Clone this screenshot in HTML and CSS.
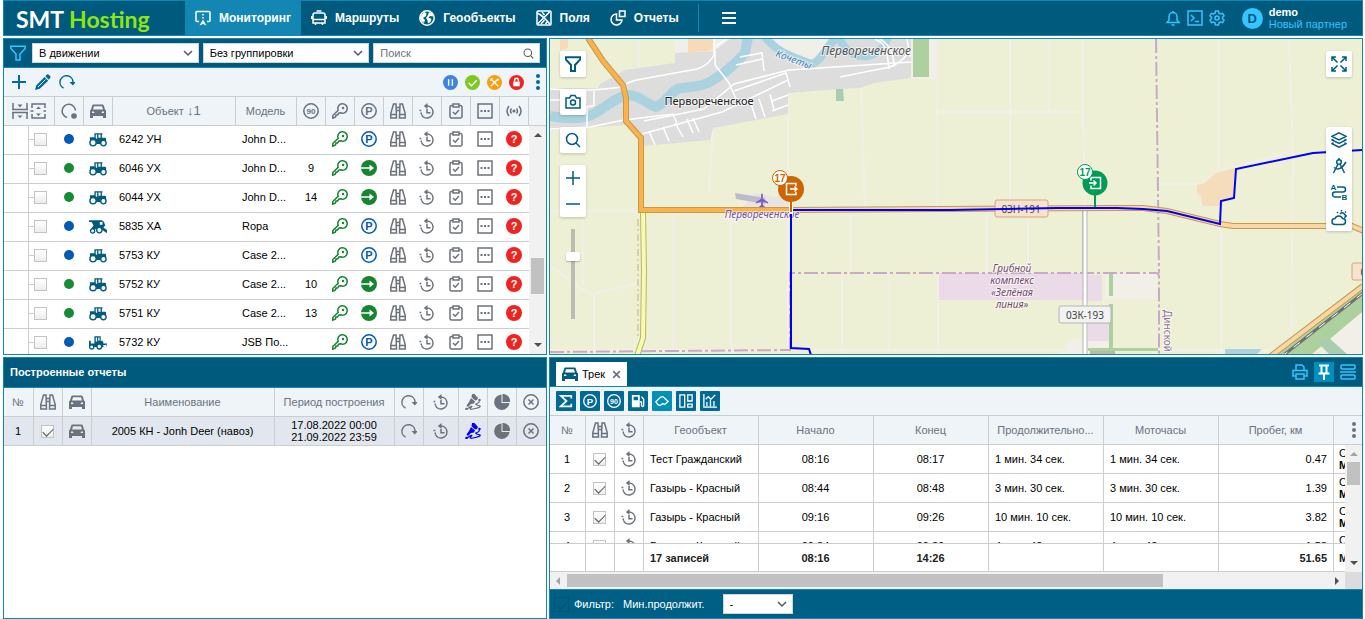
FILE: index.html
```html
<!DOCTYPE html>
<html lang="ru">
  <head>
    <meta charset="utf-8">
    <title>SMT Hosting</title>
    <link rel="stylesheet" href="styles.css">
  </head>
  <body>
    <!-- ICONS -->
    <svg class="sprite" aria-hidden="true">
      <symbol id="monitor" viewBox="0 0 16 16"><path d="M4 11.500H2a1 1 0 0 1-1-1v-8a1 1 0 0 1 1-1h12a1 1 0 0 1 1 1v8a1 1 0 0 1-1 1h-2M8 4v1.500M8 7v1.500"/><path d="M8 9.500l3.500 6L8 14l-3.500 1.500z" fill="currentColor" stroke="none"/></symbol>
      <symbol id="bus" viewBox="0 0 16 16"><path d="M5.500 1h5M4 3h8q2 0 2 2v8H2V5q0-2 2-2zM2 9.500h12M.7 6v3M15.300 6v3M4.500 13v2M11.500 13v2"/></symbol>
      <symbol id="globe" viewBox="0 0 16 16"><circle cx="8" cy="8" r="7.200"/><path d="M5 2l2.500 1L7 6 4 8l2 2-1 3-3-2.500L1 7zM10 2l3 1.500 1.500 3L11 6 9.500 7.500l3 1.500-1 3-2.500 1.500-.5-3L7 8l2-3z" fill="currentColor" stroke="none"/></symbol>
      <symbol id="fields" viewBox="0 0 16 16"><rect x="1" y="1" width="14" height="14" rx="1"/><path d="M1.500 3q7 4 13 12M1.500 14L14 1.500M5 14l3.500-4M9.500 14l1.500-2M6 2l2.500 3"/></symbol>
      <symbol id="reports" viewBox="0 0 16 16"><path d="M6.500 4A5.500 5.500 0 1 0 12 10H6.500zM9.500 1h5.500v5.500H9.500z"/></symbol>
      <symbol id="burger" viewBox="0 0 16 16"><path d="M1 3h14M1 8h14M1 13h14"/></symbol>
      <symbol id="bell" viewBox="0 0 16 16"><path d="M2 12.500h12l-2-2.500V6.500a4 4 0 0 0-8 0V10zM6.500 15h3M8 1v1.500"/></symbol>
      <symbol id="terminal" viewBox="0 0 16 16"><path d="M1 1h14v14H1zM4 5l3 3-3 3M8 11.500h4"/></symbol>
      <symbol id="gear" viewBox="0 0 16 16"><path d="M6.500 1h3l.5 2.200 1.500.8 2.100-.7 1.500 2.600L13.500 7.300v1.400l1.600 1.400-1.500 2.600-2.100-.7-1.500.8-.5 2.200h-3L6 12.800 4.500 12l-2.100.7-1.500-2.600 1.600-1.400V7.300L.9 5.900l1.500-2.600 2.100.7L6 3.200z"/><circle cx="8" cy="8" r="2"/></symbol>
      <symbol id="filter" viewBox="0 0 16 16"><path d="M.8 1.200h14.400v2.300L10 9v6H6V9L.8 3.500z"/></symbol>
      <symbol id="chevron" viewBox="0 0 16 16"><path d="M4 6l4 4 4-4"/></symbol>
      <symbol id="search" viewBox="0 0 16 16"><circle cx="7" cy="7" r="5.500"/><path d="M11 11l4 4"/></symbol>
      <symbol id="plus" viewBox="0 0 16 16"><path d="M8 1v14M1 8h14"/></symbol>
      <symbol id="minus" viewBox="0 0 16 16"><path d="M1 8h14"/></symbol>
      <symbol id="pencil" viewBox="0 0 16 16"><path d="M0 16l1.200-4.600L9.500 3l3.700 3.700-8.500 8.100zM10.300 2.300L12 .6q1-.6 1.800.2l1.500 1.500q.6.900 0 1.500l-1.500 2z" fill="currentColor" stroke="none"/><path d="M3 13l7.500-7.500" stroke="#eef4f7" stroke-width="1"/></symbol>
      <symbol id="refresh" viewBox="0 0 16 16"><path d="M4.500 14A6.500 6.500 0 1 1 14 8.500"/><path d="M10.500 8h6.500L13.800 11.500z" fill="currentColor" stroke="none"/></symbol>
      <symbol id="state" viewBox="0 0 16 16"><path d="M6 14.500A6.700 6.700 0 1 1 14.500 7.500"/><circle cx="13" cy="13" r="2.800" fill="currentColor" stroke="none"/></symbol>
      <symbol id="rows" viewBox="0 0 34 16"><path d="M0 6.500h16M0 9.500h16M1 0v6M15 0v6M1 16v-6M15 16v-6M20 5V1h13v4M20 11v4h13v-4M18.500 8h3M31.500 8h3"/><path d="M5.500 1.500h5L8 4.500zM5.500 12.500h5L8 15zM24 6h5l-2.500-2.500zM24 10.500h5L26.500 13z" fill="currentColor" stroke="none"/></symbol>
      <symbol id="car" viewBox="0 0 16 16"><path d="M3.500 1.500h9q1 0 1.300 1L15 6.500l1 1V15h-3v-2H3v2H0V7.500l1-1 1.200-4q.3-1 1.300-1zM4 3.300L3 6.500h10l-1-3.200zM2 8.500v1.500h2.500l-.5-1.500zM14 8.500v1.500h-2.500l.5-1.500z" fill="currentColor" fill-rule="evenodd" stroke="none"/></symbol>
      <symbol id="ninety" viewBox="0 0 16 16"><circle cx="8" cy="8" r="7.200"/><text x="8" y="11" class="tiny">90</text></symbol>
      <symbol id="parking" viewBox="0 0 16 16"><circle cx="8" cy="8" r="7.200"/><text x="8" y="12" class="letter">P</text></symbol>
      <symbol id="key" viewBox="0 0 16 16"><path d="M6.200 7.300a4.700 4.700 0 1 1 2.500 2.500L7 10l-1.500 2H4l-.5 2-2.700 1.200V12.500z"/><circle cx="11" cy="5" r="1.200" fill="currentColor" stroke="none"/></symbol>
      <symbol id="go" viewBox="0 0 16 16"><circle cx="8" cy="8" r="8" fill="currentColor" stroke="none"/><path d="M0 8h10" stroke="#fff"/><path d="M8.500 4.500L13 8l-4.500 3.500z" fill="#fff" stroke="none"/></symbol>
      <symbol id="bino" viewBox="0 0 16 16"><path d="M3.500 1H6l.5 14H.8V10.500zM12.500 1H10L9.500 15h5.700v-4.500zM1 11.500h5.500M9.500 11.500H15M6.200 4.500h3.600M6.200 7.500h3.600"/></symbol>
      <symbol id="history" viewBox="0 0 16 16"><path d="M8 3a6 6 0 1 1-5.600 8.200M8 6v3.800h3.500"/><path d="M8.500 0v6L4.800 3z" fill="currentColor" stroke="none"/><path d="M.5 7.500h1.800M1.500 10.300h1.500" /></symbol>
      <symbol id="task" viewBox="0 0 16 16"><path d="M5 2.500H3.500a1.500 1.500 0 0 0-1.500 1.500v9.500A1.500 1.500 0 0 0 3.500 15h9a1.500 1.500 0 0 0 1.500-1.500V4a1.500 1.500 0 0 0-1.500-1.500H11M5 1h6v3H5zM5 9l2.200 2.200L11 7"/></symbol>
      <symbol id="more" viewBox="0 0 16 16"><path d="M1 1h14v14H1z"/><path d="M3.500 7h2v2h-2zM7 7h2v2H7zM10.500 7h2v2h-2z" fill="currentColor" stroke="none"/></symbol>
      <symbol id="signal" viewBox="0 0 16 16"><circle cx="8" cy="8" r="1.600" fill="currentColor" stroke="none"/><path d="M5.500 5.500q-2 2.500 0 5M10.500 5.500q2 2.500 0 5M3 3q-4 5 0 10M13 3q4 5 0 10"/></symbol>
      <symbol id="question" viewBox="0 0 16 16"><circle cx="8" cy="8" r="8" fill="currentColor" stroke="none"/><text x="8" y="12" class="letter letter-white">?</text></symbol>
      <symbol id="tractor" viewBox="0 0 20 16"><path d="M6 1h9v1.500h-.7V6h3.700l1 1v6H3L1 8V5.500h5V2.500zM7.500 2.500v4l1.500 1V2.500zM10.500 2.500V6h2.300V2.500z" fill="currentColor" fill-rule="evenodd" stroke="none"/><circle cx="4.500" cy="11.500" r="3.500" fill="#fff"/><circle cx="16" cy="12" r="3" fill="#fff"/></symbol>
      <symbol id="combine" viewBox="0 0 20 16"><path d="M0 1h15v1.500h1.500L18 7l-2 2 6 4.500V15h-3l-5-4H2L5 7 3 3H0zM12 3v3h3V3z" fill="currentColor" fill-rule="evenodd" stroke="none"/><circle cx="4" cy="13" r="2.300" fill="#fff"/><circle cx="11.500" cy="12" r="3" fill="#fff"/></symbol>
      <symbol id="loader" viewBox="0 0 20 16"><path d="M6 1h7v5h2l1 2v5H0V6h2v3h4zM7.500 2.500V7H9V2.500zM10.300 2.500V6h1.400V2.500z" fill="currentColor" fill-rule="evenodd" stroke="none"/><circle cx="3" cy="13" r="2.300" fill="#fff"/><circle cx="11.500" cy="12.500" r="2.700" fill="#fff"/><path d="M15 10h4M22 7q-4 3.500 0 7"/></symbol>
      <symbol id="pause" viewBox="0 0 16 16"><circle cx="8" cy="8" r="8" fill="#3e84dc" stroke="none"/><path d="M6 4.500v7M10 4.500v7" stroke="#fff"/></symbol>
      <symbol id="ok" viewBox="0 0 16 16"><circle cx="8" cy="8" r="8" fill="#7ec820" stroke="none"/><path d="M4 8.500L7 11.500 12.500 5.500" stroke="#fff"/></symbol>
      <symbol id="repair" viewBox="0 0 16 16"><circle cx="8" cy="8" r="8" fill="#ff9c0a" stroke="none"/><path d="M4 4l8 8M12 4l-8 8M3.500 6L6 3.500M10 6l3-1" stroke="#fff"/></symbol>
      <symbol id="lock" viewBox="0 0 16 16"><circle cx="8" cy="8" r="8" fill="#ee2420" stroke="none"/><path d="M4.500 7h7v5h-7z" fill="#fff" stroke="none"/><path d="M6 7V5.500a2 2 0 0 1 4 0V7" stroke="#fff"/></symbol>
      <symbol id="dots" viewBox="0 0 4 16"><g fill="currentColor" stroke="none"><circle cx="2" cy="2" r="2"/><circle cx="2" cy="8" r="2"/><circle cx="2" cy="14" r="2"/></g></symbol>
      <symbol id="track" viewBox="0 0 16 16"><path d="M7 0l2-.5L13 4l-1 2-2 .5L6.500 3zM6 4l4 3.500-1 2-3 .5-3 3-1.500-1.500L4 8z" fill="currentColor" stroke="none"/><path d="M14 6.500q1 2-2 3t1.500 2-3 3-4.500-1-4 1.500" stroke-width="1.200"/><circle cx="1.500" cy="15" r="1.300" fill="currentColor" stroke="none"/><circle cx="14.500" cy="6" r="1.200" fill="currentColor" stroke="none"/></symbol>
      <symbol id="pie" viewBox="0 0 16 16"><path d="M7.500 .5a7.700 7.700 0 1 0 8 8.500H7.500z" fill="currentColor" stroke="none"/><path d="M8.500 0a7 7 0 0 1 7.500 8H8.500z" fill="currentColor" stroke="none"/></symbol>
      <symbol id="close" viewBox="0 0 16 16"><circle cx="8" cy="8" r="7.200"/><path d="M5.500 5.500l5 5M10.500 5.500l-5 5"/></symbol>
      <symbol id="cross" viewBox="0 0 16 16"><path d="M2 2l12 12M14 2L2 14"/></symbol>
      <symbol id="printer" viewBox="0 0 16 16"><path d="M4 6V1h6l2 2v3M4 12H1V6.500h14V12h-3M4 10h8v5H4z"/></symbol>
      <symbol id="pin" viewBox="0 0 16 16"><path d="M3 1.500h10M5.500 2v7M10.500 2v7M2.500 9.500h11M8 9.500V16" stroke-width="2"/></symbol>
      <symbol id="list" viewBox="0 0 16 16"><rect x="1" y="1" width="14" height="4" rx="1"/><path d="M0 8h16"/><rect x="1" y="11" width="14" height="4" rx="1"/></symbol>
      <symbol id="sum" viewBox="0 0 16 16"><path d="M14 5V2H2l6.500 6L2 14h12v-3"/></symbol>
      <symbol id="fuel" viewBox="0 0 16 16"><path d="M1 1h9v14H1zM3 3v4h5V3z" fill="currentColor" fill-rule="evenodd" stroke="none"/><path d="M12 3l2.500 3v7q-1.500 3-2.500 0V9h-2"/></symbol>
      <symbol id="shape" viewBox="0 0 16 16"><path d="M3.500 12.500L1 9 6.500 3.500 9 3l6 5.500-4 3.500-2-1-3 2z"/></symbol>
      <symbol id="blocks" viewBox="0 0 16 16"><path d="M1 1h5.500v14H1zM10 1h5v7h-5zM10 11.500h5V15h-5z"/></symbol>
      <symbol id="chart" viewBox="0 0 16 16"><path d="M1 0v15h15M4.500 14V9M8.500 14V7M12.500 14V8M3 6l3-3 3 3 5-5"/></symbol>
      <symbol id="camera" viewBox="0 0 16 16"><path d="M1 4h3.500L6 1.500h4L11.500 4H15v10H1z"/><circle cx="8" cy="8.500" r="2.500"/></symbol>
      <symbol id="expand" viewBox="0 0 16 16"><path d="M1 5V1h4M11 1h4v4M15 11v4h-4M5 15H1v-4M1 1l5.500 5.500M15 1L9.500 6.500M15 15L9.500 9.500M1 15l5.500-5.500"/></symbol>
      <symbol id="layers" viewBox="0 0 16 16"><path d="M8 .8l7 3.500-7 3.500-7-3.500zM2.500 7L1 8l7 3.500L15 8l-1.500-1M2.500 10.700L1 11.700l7 3.500 7-3.500-1.500-1"/></symbol>
      <symbol id="compass" viewBox="0 0 16 16"><circle cx="8" cy="4" r="2.300"/><path d="M7 6L2.500 15M9 6l4.500 9M3 9.500q6 4.500 12-5.500M8 0v2"/></symbol>
      <symbol id="route" viewBox="0 0 16 16"><path d="M6 3h6a2.500 2.500 0 0 1 0 5H4a2.500 2.500 0 0 0 0 5h6"/><text x="2.500" y="5.500" class="tiny">A</text><text x="13.500" y="15.500" class="tiny">B</text></symbol>
      <symbol id="weather" viewBox="0 0 16 16"><path d="M4 14.500a3 3 0 0 1 0-6 4 4 0 0 1 7.500 0 3 3 0 0 1 0 6zM9 4a3 3 0 0 1 4.500 4M10.500 0v1.500M15 1.500L14 2.500M16 6h-1.500M6 2l1 1"/></symbol>
      <symbol id="plane" viewBox="0 0 16 16"><path d="M7 1q1-2 2 0v5l6 4v1.500L9 9.500V13l2 1.500v1H5v-1L7 13V9.500L1 11.500V10l6-4z" fill="currentColor" stroke="none"/></symbol>
    </svg>

    <header class="top">
      <a class="logo" href="#"><span>SMT</span> Hosting</a>
      <nav class="menu">
        <a class="active" href="#"><svg class="icon"><use href="#monitor"/></svg>Мониторинг</a>
        <a href="#"><svg class="icon"><use href="#bus"/></svg>Маршруты</a>
        <a href="#"><svg class="icon"><use href="#globe"/></svg>Геообъекты</a>
        <a href="#"><svg class="icon"><use href="#fields"/></svg>Поля</a>
        <a href="#"><svg class="icon"><use href="#reports"/></svg>Отчеты</a>
        <button class="burger" aria-label="Меню"><svg class="icon thick"><use href="#burger"/></svg></button>
      </nav>
      <div class="tools">
        <button aria-label="Уведомления"><svg class="icon"><use href="#bell"/></svg></button>
        <button aria-label="Консоль"><svg class="icon"><use href="#terminal"/></svg></button>
        <button aria-label="Настройки"><svg class="icon"><use href="#gear"/></svg></button>
      </div>
      <div class="user">
        <span class="avatar">D</span>
        <div><b>demo</b><span>Новый партнер</span></div>
      </div>
    </header>

    <!-- OBJECTS -->
    <section class="panel objects">
      <form class="filters">
        <svg class="icon"><use href="#filter"/></svg>
        <label class="select"><select aria-label="Состояние"><option>В движении</option></select><svg class="icon"><use href="#chevron"/></svg></label>
        <label class="select"><select aria-label="Группировка"><option>Без группировки</option></select><svg class="icon"><use href="#chevron"/></svg></label>
        <label class="select"><input type="text" placeholder="Поиск" aria-label="Поиск"><svg class="icon small"><use href="#search"/></svg></label>
      </form>
      <div class="toolbar">
        <button aria-label="Добавить"><svg class="icon thick"><use href="#plus"/></svg></button>
        <button aria-label="Изменить"><svg class="icon"><use href="#pencil"/></svg></button>
        <button aria-label="Обновить"><svg class="icon"><use href="#refresh"/></svg></button>
        <div class="states">
          <button aria-label="Пауза"><svg class="icon"><use href="#pause"/></svg></button>
          <button aria-label="Исправен"><svg class="icon"><use href="#ok"/></svg></button>
          <button aria-label="Ремонт"><svg class="icon"><use href="#repair"/></svg></button>
          <button aria-label="Заблокирован"><svg class="icon"><use href="#lock"/></svg></button>
          <button aria-label="Еще"><svg class="icon dots"><use href="#dots"/></svg></button>
        </div>
      </div>
      <div class="grid">
        <table>
          <colgroup>
            <col class="w51"><col class="w29"><col class="w29"><col><col class="w61">
            <col class="w29"><col class="w29"><col class="w29"><col class="w29"><col class="w29"><col class="w29"><col class="w29"><col class="w29">
            <col class="w17">
          </colgroup>
          <thead>
            <tr>
              <th><svg class="icon rows"><use href="#rows"/></svg></th>
              <th><svg class="icon"><use href="#state"/></svg></th>
              <th><svg class="icon"><use href="#car"/></svg></th>
              <th>Объект <span class="sort">↓1</span></th>
              <th>Модель</th>
              <th><svg class="icon"><use href="#ninety"/></svg></th>
              <th><svg class="icon"><use href="#key"/></svg></th>
              <th><svg class="icon"><use href="#parking"/></svg></th>
              <th><svg class="icon"><use href="#bino"/></svg></th>
              <th><svg class="icon"><use href="#history"/></svg></th>
              <th><svg class="icon"><use href="#task"/></svg></th>
              <th><svg class="icon"><use href="#more"/></svg></th>
              <th><svg class="icon"><use href="#signal"/></svg></th>
              <th></th>
            </tr>
          </thead>
          <tbody id="objects"></tbody>
        </table>
        <div class="vscroll"><i class="up"></i><span class="thumb"></span><i class="down"></i></div>
      </div>
    </section>

    <!-- MAP -->
    <section class="panel map">
      <svg class="canvas" viewBox="0 0 812 315" preserveAspectRatio="xMidYMid slice">
        <rect width="812" height="315" fill="#edf0d5"/>
        <!-- field tracks -->
        <g fill="none" stroke="#f2efe9" stroke-width="2">
          <path d="M387 0v168M311 50l4 118M460 0v168M499 0v74M533 0v74l2 94M387 73h146M301 173v60M437 173v60M478 173v60M292 235v75M339 235v75M388 235v78"/>
          <path d="M669 0v130M671 186v129M739 0l4 115-2 200M609 145h40l18-12 72-20"/>
          <path d="M163 89l-4 62M238 54v258M123 175v140M181 175v140M33 180v66M0 172h90M0 227l31 22 12 6 45-11M44 255v60M125 24h0M0 311h812M89 0v30"/>
        </g>
        <path d="M125 0h55l-16 14h-39zM361 0h26v40h-26z" fill="#f2efe9"/>
        <path d="M555 234h52v26h-52zM520 300h40v15h-50zM770 315l42-52v52z" fill="#f2efe9"/>
        <!-- village -->
        <path d="M0 49h48l2-4 25-14 50-7V14l39-2 16-12h181v39l-37 5-14 5-20 1-52 4v21l-75 14-3 12-66 6-18-21-76 5z" fill="#ddd"/>
        <path d="M220 0h58l-4 14-14 8-22-8z" fill="#f2efe9"/>
        <path d="M138 0h25v11l-25 3zM10 0h8v9l-8 3z" fill="#f8dab8"/>
        <path d="M363 0h16v38h-16z" fill="#add19e"/>
        <path d="M286 50h7l1 12h-8z" fill="#a9cdb0"/>
        <g fill="none" stroke="#aad3df" stroke-width="10">
          <path d="M0 77q18 4 35 1c14-2 28-20 43-22 12 0 20 10 28 12 12-5 15-18 25-19 12-2 18-1 27-5 14-8 22-14 37-30l3-16"/>
          <path d="M214-3c12 15 24 20 48 28 12-4 14-22 27-26 6 12 14 20 29 18 14-4 18-12 20-20" stroke-width="8"/>
        </g>
        <!-- streets -->
        <g fill="none" stroke="#fff" stroke-width="1.500">
          <path d="M0 50q40 3 72-2 6-6 20-8l55-10q12-4 17-14V0M165 12v14l14 18 8 18M94 82l60-12 30-25 55-14 122-8"/>
          <path d="M0 90l40-2 34-7 50-6M92 95l80-22 66-32M165 8l14-10M36 52v12q-2 3-6 3M44 52v14q-2 2-12 2M0 61h34M37 66v22"/>
          <path d="M99 92l6 14M113 88l6 14M125 84l8 14M137 80l6 14M143 79l6 14M123 76l4 8M200 62l6 18M209 60l6 18M220 55l4 16M184 52l52-18 4 14M186 26l26-6M190 18l22-4 2 18M222 62l16-6M222 72l16-6"/>
          <path d="M290 38l40-8q20-2 31-20M325 0q10 4 12 14l2 16M330 0q14 8 14 28M357 0l3 18"/>
        </g>
        <!-- land use -->
        <path d="M389 234h144v27H389zM537 236h15v26h-15zM538 276h21v26h-21z" fill="#ebdbe8"/>
        <path d="M559 234h4v23h-4zM559 265h4v45h-4zM538 309h70v3h-70zM532 172h2v62h-2z" fill="#add19e"/>
        <path d="M540 312h25v3h-25z" fill="#b9b9a8"/>
        <path d="M647 146l8-2 10-10 20-5v31l-15 3v4h-17l-2-9-4-4z" fill="#f5dcba"/>
        <path d="M193 168l12-14 20 4 14-6v16z" fill="#e7e4e2"/>
        <path d="M185 154l30 5v6l-29-5z" fill="#bbbbcb"/>
        <path d="M675 310h37l-5 5h-32z" fill="#aad3df"/>
        <path d="M728 315l84-66v24l-50 42z" fill="#add19e"/>
        <path d="M767 303l12-4 18 16h-18z" fill="#a9cdb0"/>
        <!-- borders -->
        <g fill="none" stroke="#c8aac8" stroke-width="2" stroke-dasharray="14 3 3 3">
          <path d="M240 312v-78h366q3 0 3 4v77M0 313l240-2M606 0l3 234"/>
        </g>
        <path d="M88 180v118" fill="none" stroke="#c9b083" stroke-dasharray="7 3 2 3"/>
        <!-- roads -->
        <g fill="none">
          <path d="M93 172l1 60-1 67-6 18" stroke="#b9b66a" stroke-width="6"/>
          <path d="M93 172l1 60-1 67-6 18" stroke="#f7fab0" stroke-width="4"/>
          <path d="M535 172v143" stroke="#b5b5b5" stroke-width="5"/>
          <path d="M535 172v143" stroke="#fff" stroke-width="3"/>
          <path d="M238 171l327-2 28 0 24 3 53 13 13 2h119l12 5M813 247l-92 70" stroke="#c39a50" stroke-width="6"/>
          <path d="M238 171l327-2 28 0 24 3 53 13 13 2h119l12 5M813 247l-92 70" stroke="#fcd6a4" stroke-width="4"/>
          <path d="M38-1l15 23 20 24 3 13v23l15 17v72h150" stroke="#c39a50" stroke-width="6"/>
          <path d="M38-1l15 23 20 24 3 13v23l15 17v72h150" stroke="#fbb24a" stroke-width="4"/>
          <path d="M813 254l-78 61" stroke="#707070" stroke-width="3"/>
          <path d="M813 254l-78 61" stroke="#fff" stroke-width="1" stroke-dasharray="8 8"/>
        </g>
        <!-- labels -->
        <g class="place">
          <text x="159" y="66" class="town">Первореченское</text>
          <text x="316" y="16" class="district">Первореченское</text>
          <text x="212" y="179" class="airport">Первореченское</text>
          <text x="244" y="24" class="river" transform="rotate(20 244 20)">Кочеты</text>
          <text class="factory" y="233"><tspan x="462">Грибной</tspan><tspan x="462" dy="12">комплекс</tspan><tspan x="462" dy="12">«Зелёная</tspan><tspan x="462" dy="12">линия»</tspan></text>
          <text class="region" transform="translate(614 292) rotate(90)">Динской</text>
        </g>
        <g class="plate">
          <rect x="445" y="161" width="53" height="17" rx="2" fill="#f8e2cc" stroke="#d0a684"/>
          <text x="471" y="174">03Н-191</text>
          <rect x="509" y="267" width="52" height="17" rx="2" fill="#f2f2f2" stroke="#b4b4b4"/>
          <text x="535" y="280">03К-193</text>
          <rect x="802" y="224" width="53" height="17" rx="2" fill="#f8e2cc" stroke="#d0a684"/>
          <text x="830" y="237">03Н-191</text>
        </g>
        <use href="#plane" x="205" y="154" width="14" height="15" color="#7d5fc0"/>
        <!-- track -->
        <path d="M261 316l-2-6-18-1V171h160l106-2h60l26 1 24 2 53 13 1-23 13-3 2-29 77-16 49-3" fill="none" stroke="#0000f5" stroke-width="2"/>
        <g class="marker" color="#cd6400">
          <path d="M241 160v15" stroke="#fff" stroke-width="4"/><path d="M241 160v13" stroke="currentColor" stroke-width="2"/>
          <circle cx="241" cy="150" r="13" fill="currentColor"/>
          <path d="M246 147v-2.500h-9.500v11H246V153M240 150h7M244.500 147.500l2.500 2.500-2.500 2.500" fill="none" stroke="#fff" stroke-width="1.500"/>
          <circle cx="230" cy="139" r="7.500" fill="#fff" stroke="currentColor"/>
          <text x="230" y="143">17</text>
        </g>
        <g class="marker" color="#009b55">
          <path d="M545 154v14" stroke="currentColor" stroke-width="2"/>
          <circle cx="545" cy="144" r="12.500" fill="currentColor"/>
          <path d="M541 141.500v-3h9.500v11H541v-3M539 144h7M543.500 141.500l2.500 2.500-2.500 2.500" fill="none" stroke="#fff" stroke-width="1.500"/>
          <circle cx="535" cy="133" r="7.500" fill="#fff" stroke="currentColor"/>
          <text x="535" y="137">17</text>
        </g>
      </svg>
      <div class="controls left">
        <button class="box" aria-label="Фильтр"><svg class="icon thick"><use href="#filter"/></svg></button>
        <button class="box" aria-label="Снимок"><svg class="icon"><use href="#camera"/></svg></button>
        <button class="box" aria-label="Найти"><svg class="icon"><use href="#search"/></svg></button>
        <div class="box"><button aria-label="Ближе"><svg class="icon"><use href="#plus"/></svg></button><button aria-label="Дальше"><svg class="icon"><use href="#minus"/></svg></button></div>
        <input class="zoom" type="range" min="0" max="100" value="72" aria-label="Масштаб">
      </div>
      <div class="controls right">
        <button class="box" aria-label="На весь экран"><svg class="icon"><use href="#expand"/></svg></button>
        <div class="box layers">
          <button aria-label="Слои"><svg class="icon"><use href="#layers"/></svg></button>
          <button aria-label="Измерение"><svg class="icon"><use href="#compass"/></svg></button>
          <button aria-label="Маршрут"><svg class="icon"><use href="#route"/></svg></button>
          <button aria-label="Погода"><svg class="icon"><use href="#weather"/></svg></button>
        </div>
      </div>
    </section>

    <!-- REPORTS -->
    <section class="panel reports">
      <h2>Построенные отчеты</h2>
      <table class="lined">
        <colgroup>
          <col class="w30"><col class="w29"><col class="w29"><col><col class="w120">
          <col class="w29"><col class="w35"><col class="w29"><col class="w29"><col class="w29">
        </colgroup>
        <thead>
          <tr>
            <th>№</th>
            <th><svg class="icon"><use href="#bino"/></svg></th>
            <th><svg class="icon"><use href="#car"/></svg></th>
            <th>Наименование</th>
            <th>Период построения</th>
            <th><svg class="icon"><use href="#refresh"/></svg></th>
            <th><svg class="icon"><use href="#history"/></svg></th>
            <th><svg class="icon"><use href="#track"/></svg></th>
            <th><svg class="icon"><use href="#pie"/></svg></th>
            <th><svg class="icon"><use href="#close"/></svg></th>
          </tr>
        </thead>
        <tbody>
          <tr class="selected">
            <td>1</td>
            <td><input type="checkbox" checked aria-label="Показать отчет"></td>
            <td><svg class="icon"><use href="#car"/></svg></td>
            <td>2005 КН - Jonh Deer (навоз)</td>
            <td>17.08.2022 00:00<br>21.09.2022 23:59</td>
            <td><svg class="icon"><use href="#refresh"/></svg></td>
            <td><svg class="icon"><use href="#history"/></svg></td>
            <td><svg class="icon bright"><use href="#track"/></svg></td>
            <td><svg class="icon"><use href="#pie"/></svg></td>
            <td><svg class="icon"><use href="#close"/></svg></td>
          </tr>
        </tbody>
      </table>
    </section>

    <!-- TRACK -->
    <section class="panel trek">
      <div class="tabs">
        <a class="tab" href="#"><svg class="icon"><use href="#car"/></svg>Трек<svg class="icon cross"><use href="#cross"/></svg></a>
        <div class="tab-tools">
          <button aria-label="Печать"><svg class="icon"><use href="#printer"/></svg></button>
          <button class="on" aria-label="Закрепить"><svg class="icon"><use href="#pin"/></svg></button>
          <button aria-label="Список"><svg class="icon"><use href="#list"/></svg></button>
        </div>
      </div>
      <div class="toolbar tiles">
        <button aria-label="Итоги"><svg class="icon thick"><use href="#sum"/></svg></button>
        <button aria-label="Стоянки"><svg class="icon"><use href="#parking"/></svg></button>
        <button aria-label="Скорость"><svg class="icon"><use href="#ninety"/></svg></button>
        <button aria-label="Топливо"><svg class="icon"><use href="#fuel"/></svg></button>
        <button class="on" aria-label="Геообъекты"><svg class="icon"><use href="#shape"/></svg></button>
        <button aria-label="Блоки"><svg class="icon"><use href="#blocks"/></svg></button>
        <button aria-label="График"><svg class="icon"><use href="#chart"/></svg></button>
      </div>
      <div class="grid">
        <div class="rows-area">
          <table class="lined">
            <colgroup>
              <col class="w36"><col class="w29"><col class="w29">
              <col class="w115"><col class="w115"><col class="w115"><col class="w115"><col class="w115"><col class="w115"><col>
            </colgroup>
            <thead>
              <tr>
                <th>№</th>
                <th><svg class="icon"><use href="#bino"/></svg></th>
                <th><svg class="icon"><use href="#history"/></svg></th>
                <th>Геообъект</th>
                <th>Начало</th>
                <th>Конец</th>
                <th>Продолжительно...</th>
                <th>Моточасы</th>
                <th>Пробег, км</th>
                <th class="menu-cell"><svg class="icon dots"><use href="#dots"/></svg></th>
              </tr>
            </thead>
            <tbody id="trek"></tbody>
          </table>
        </div>
        <table class="lined total">
          <colgroup>
            <col class="w36"><col class="w29"><col class="w29">
            <col class="w115"><col class="w115"><col class="w115"><col class="w115"><col class="w115"><col class="w115"><col>
          </colgroup>
          <tbody>
            <tr>
              <td></td><td></td><td></td>
              <td class="text">17 записей</td><td>08:16</td><td>14:26</td>
              <td></td><td></td>
              <td class="num">51.65</td><td class="cut">М</td>
            </tr>
          </tbody>
        </table>
        <div class="vscroll"><i class="up off"></i><span class="thumb"></span><i class="down"></i></div>
      </div>
      <div class="hscroll"><i class="prev"></i><span class="thumb"></span><i class="next"></i><span class="corner"></span></div>
      <div class="bottom-bar">
        <input type="checkbox" id="use-filter" checked>
        <label for="use-filter">Фильтр:</label>
        <label for="min-time">Мин.продолжит.</label>
        <span class="select"><select id="min-time"><option>-</option></select><svg class="icon"><use href="#chevron"/></svg></span>
      </div>
    </section>

    <!-- JAVASCRIPT -->
    <script>
      const icon = (name, cls = "") =>
        `<svg class="icon ${cls}"><use href="#${name}"/></svg>`;

      // name, model, speed (0 = parked), vehicle
      const objects = [
        ["6242 УН", "John D...", 0, "tractor"],
        ["6046 УХ", "John D...", 9, "tractor"],
        ["6044 УХ", "John D...", 14, "tractor"],
        ["5835 ХА", "Ropa", 0, "combine"],
        ["5753 КУ", "Case 2...", 0, "tractor"],
        ["5752 КУ", "Case 2...", 10, "tractor"],
        ["5751 КУ", "Case 2...", 13, "tractor"],
        ["5732 КУ", "JSB По...", 0, "loader"],
      ];

      document.querySelector("#objects").innerHTML = objects
        .map(
          ([name, model, speed, vehicle]) => `
        <tr>
          <td class="tree"><span><input type="checkbox" aria-label="${name}"></span></td>
          <td><span class="dot ${speed ? "moving" : ""}"></span></td>
          <td>${icon(vehicle, "vehicle")}</td>
          <td class="text">${name}</td>
          <td class="text">${model}</td>
          <td>${speed || ""}</td>
          <td>${icon("key", "green")}</td>
          <td>${speed ? icon("go", "green") : icon("parking", "blue")}</td>
          <td>${icon("bino")}</td>
          <td>${icon("history")}</td>
          <td>${icon("task")}</td>
          <td>${icon("more")}</td>
          <td>${icon("question", "red")}</td>
          <td></td>
        </tr>`
        )
        .join("");

      const trek = [
        ["Тест Гражданский", "08:16", "08:17", "1 мин. 34 сек.", "0.47"],
        ["Газырь - Красный", "08:44", "08:48", "3 мин. 30 сек.", "1.39"],
        ["Газырь - Красный", "09:16", "09:26", "10 мин. 10 сек.", "3.82"],
        ["Газырь - Красный", "09:34", "09:39", "4 мин. 42 сек.", "1.58"],
      ];

      document.querySelector("#trek").innerHTML = trek
        .map(
          ([place, start, end, time, km], i) => `
        <tr>
          <td>${i + 1}</td>
          <td><input type="checkbox" checked aria-label="${place}"></td>
          <td>${icon("history")}</td>
          <td class="text">${place}</td>
          <td>${start}</td>
          <td>${end}</td>
          <td class="text">${time}</td>
          <td class="text">${time}</td>
          <td class="num">${km}</td>
          <td class="cut">С<br><b>М</b></td>
        </tr>`
        )
        .join("");
    </script>
  </body>
</html>
```
FILE: styles.css
```css
* {
  box-sizing: border-box;
}

body {
  margin: 0;
  padding: 0 2px 0 3px;
  height: 100vh;
  display: grid;
  grid-template-columns: minmax(0, 544fr) minmax(0, 814fr);
  grid-template-rows: 36px minmax(0, 317fr) minmax(0, 262fr);
  gap: 2px;
  font: 11px/12px "Liberation Sans", Arial, sans-serif;
  color: #000;
  background-color: #fff;
}

a {
  color: inherit;
  text-decoration: none;
}

button {
  display: flex;
  align-items: center;
  justify-content: center;
  border: 0;
  padding: 0;
  background: none;
  color: inherit;
}

.sprite {
  display: none;
}

.icon {
  width: 16px;
  height: 16px;
  flex: none;
  fill: none;
  stroke: currentColor;
  stroke-width: 1.5;
  overflow: visible;
}

.icon.thick {
  stroke-width: 2;
}

.icon.small {
  width: 11px;
  height: 11px;
}

.icon.rows {
  width: 34px;
}

.icon.vehicle {
  width: 18px;
  height: 15px;
}

.icon.dots {
  width: 4px;
}

.tiny,
.letter {
  font-family: "Liberation Sans", Arial, sans-serif;
  font-weight: bold;
  text-anchor: middle;
  fill: currentColor;
  stroke: none;
}

.tiny {
  font-size: 8px;
}

.letter {
  font-size: 11px;
}

.letter-white {
  fill: #fff;
}

/* header */
.top {
  grid-column: 1 / 3;
  display: flex;
  align-items: stretch;
  border: 1px solid #1386b4;
  background-color: #005a7d;
  color: #fff;
}

.logo {
  width: 181px;
  padding-left: 12px;
  font: bold 23px/36px Lato, "Noto Sans", sans-serif;
  color: #8de610;
}

.logo span {
  color: #fff;
}

.menu {
  display: flex;
  flex: 1;
  font-size: 12px;
  font-weight: bold;
}

.menu a {
  display: flex;
  align-items: center;
  gap: 8px;
  padding: 0 10px;
}

.menu a.active {
  background-color: #1386b4;
}

.burger {
  margin: 3px 0 3px 9px;
  padding-left: 22px;
  border-left: 1px solid #1386b4;
}

.tools {
  display: flex;
  gap: 6px;
  align-items: center;
  color: #35c5ff;
}

.user {
  display: flex;
  align-items: center;
  gap: 6px;
  padding: 0 15px 0 17px;
}

.user b,
.user div span {
  display: block;
}

.user div span {
  color: #35c5ff;
}

.avatar {
  width: 21px;
  border-radius: 50%;
  background-color: #35c5ff;
  color: #005a7d;
  font-size: 13px;
  font-weight: bold;
  line-height: 21px;
  text-align: center;
}

/* panels */
.panel {
  position: relative;
  display: flex;
  flex-direction: column;
  min-height: 0;
  overflow: hidden;
  border: 1px solid #1386b4;
}

.filters {
  display: flex;
  align-items: center;
  gap: 4px;
  height: 29px;
  padding: 0 6px;
  background-color: #005a7d;
  border-bottom: 1px solid #1386b4;
  color: #35c5ff;
}

.filters > .icon {
  margin-right: 2px;
}

.select {
  position: relative;
  flex: 1;
  min-width: 0;
}

.select select,
.select input {
  display: block;
  width: 100%;
  height: 20px;
  margin: 0;
  padding: 0 6px;
  border: 1px solid #cdd6da;
  border-radius: 0;
  background-color: #fff;
  color: #000;
  font: inherit;
  appearance: none;
}

.select input::placeholder {
  color: #6b7280;
}

.select .icon {
  position: absolute;
  top: 2px;
  right: 3px;
  color: #55595e;
  pointer-events: none;
}

.select .icon.small {
  top: 5px;
  right: 6px;
}

.toolbar {
  display: flex;
  align-items: center;
  gap: 8px;
  height: 29px;
  padding: 0 6px 0 7px;
  background-color: #eef4f7;
  border-bottom: 1px solid #cdcdcd;
  color: #00699a;
}

.states {
  display: flex;
  gap: 7px;
  margin-left: auto;
}

.states .icon {
  width: 15px;
  height: 15px;
}

.states .dots {
  width: 4px;
  height: 16px;
  margin-left: 5px;
}

/* tables */
.grid {
  position: relative;
  display: flex;
  flex-direction: column;
  flex: 1;
  min-height: 0;
  overflow: hidden;
}

.rows-area {
  flex: 1;
  min-height: 0;
  overflow: hidden;
}

table {
  width: 100%;
  table-layout: fixed;
  border-collapse: separate;
  border-spacing: 0;
}

th,
td {
  height: 29px;
  padding: 0 1px 0 0;
  border-bottom: 1px solid #cdcdcd;
  text-align: center;
  white-space: nowrap;
  overflow: hidden;
}

th {
  border-right: 1px solid #cdcdcd;
  background-color: #eef4f7;
  color: #6b7280;
  font-weight: normal;
}

.lined td {
  border-right: 1px solid #cdcdcd;
}

th:last-child,
.lined td:last-child {
  border-right: 0;
}

th .icon,
td .icon {
  display: block;
  margin: 0 auto;
}

td .icon {
  color: #6d7278;
}

td .icon.vehicle {
  color: #005b80;
}

td .icon.green {
  color: #168430;
}

td .icon.blue {
  color: #005ab4;
}

td .icon.red {
  color: #ee2420;
}

td .icon.bright {
  color: #0000f5;
}

.objects td {
  padding-bottom: 2px;
}

.objects .tree {
  padding-bottom: 0;
}

td.text {
  padding-left: 6px;
  text-align: left;
}

td.num {
  padding-right: 6px;
  text-align: right;
}

td.cut {
  padding-left: 5px;
  text-align: left;
}

.sort {
  font-size: 13px;
}

.selected td {
  background-color: #e2e7ef;
}

.w17 { width: 17px; }
.w29 { width: 29px; }
.w30 { width: 30px; }
.w35 { width: 35px; }
.w36 { width: 36px; }
.w51 { width: 51px; }
.w61 { width: 61px; }
.w115 { width: 115px; }
.w120 { width: 120px; }

.tree span {
  display: flex;
  align-items: center;
  height: 28px;
  margin-left: 24px;
  padding-bottom: 1px;
  border-left: 1px solid #cdcdcd;
}

.tree span::before {
  content: "";
  width: 5px;
  border-top: 1px solid #cdcdcd;
}

.dot {
  display: block;
  width: 10px;
  height: 10px;
  margin: 0 auto;
  border-radius: 50%;
  background-color: #005ab4;
}

.dot.moving {
  background-color: #168c34;
}

input[type="checkbox"] {
  appearance: none;
  display: block;
  width: 13px;
  height: 13px;
  margin: 0 auto;
  border: 1px solid #c3c3c3;
  background: linear-gradient(#fff, #ededed);
}

.tree input[type="checkbox"] {
  margin: 0;
}

input[type="checkbox"]:checked::after {
  content: "";
  display: block;
  width: 9px;
  height: 5px;
  margin: 2px 0 0 1px;
  border: solid #555;
  border-width: 0 0 1px 1px;
  transform: rotate(-45deg);
}

/* scrollbars */
.vscroll {
  position: absolute;
  top: 29px;
  right: 0;
  bottom: 0;
  width: 17px;
  display: flex;
  flex-direction: column;
  align-items: center;
  padding: 7px 0;
  background-color: #f1f1f1;
}

.vscroll i,
.hscroll i {
  border: 4px solid transparent;
}

.vscroll .up {
  border-top: 0;
  border-bottom-color: #505050;
}

.vscroll .up.off {
  border-bottom-color: #a3a3a3;
}

.vscroll .down {
  border-bottom: 0;
  border-top-color: #505050;
  margin-top: auto;
}

.thumb {
  background-color: #c1c1c1;
}

.vscroll .thumb {
  width: 13px;
}

.objects .vscroll .thumb {
  height: 36px;
  margin-top: 121px;
}

.trek .vscroll .thumb {
  height: 23px;
  margin-top: 6px;
}

.hscroll {
  display: flex;
  align-items: center;
  height: 17px;
  padding-left: 6px;
  background-color: #f1f1f1;
}

.hscroll .prev {
  border-left: 0;
  border-right-color: #a3a3a3;
}

.hscroll .next {
  border-right: 0;
  border-left-color: #505050;
  margin: 0 6px 0 auto;
}

.hscroll .thumb {
  width: 74%;
  height: 13px;
  margin-left: 7px;
}

.corner {
  align-self: stretch;
  width: 17px;
  background-color: #dcdcdc;
}

/* reports */
h2 {
  height: 30px;
  margin: 0;
  padding-left: 6px;
  background-color: #005a7d;
  border-bottom: 1px solid #1386b4;
  color: #fff;
  font-size: 11px;
  line-height: 29px;
}

/* track */
.tabs {
  display: flex;
  align-items: center;
  justify-content: space-between;
  height: 29px;
  padding: 0 4px 0 6px;
  background-color: #005a7d;
  border-bottom: 1px solid #1386b4;
}

.tab {
  display: flex;
  align-items: center;
  align-self: flex-end;
  gap: 4px;
  height: 24px;
  padding: 0 6px;
  background-color: #fff;
}

.tab .icon {
  color: #005b80;
}

.tab .icon.cross {
  width: 9px;
  height: 9px;
  margin-left: 3px;
  stroke-width: 3;
  color: #6b7280;
}

.tab-tools {
  display: flex;
  gap: 4px;
  color: #35c5ff;
}

.tab-tools button,
.tiles button {
  width: 20px;
  height: 20px;
}

.tab-tools .on {
  background-color: #008ebc;
  color: #fff;
}

.tiles {
  gap: 4px;
  padding-left: 6px;
}

.tiles button {
  border-radius: 1px;
  background-color: #006a96;
  color: #fff;
}

.tiles .on {
  background-color: #0090b8;
}

.tiles .icon {
  width: 14px;
  height: 14px;
}

.menu-cell {
  padding-left: 12px;
}

.total {
  border-top: 1px solid #cdcdcd;
  color: #222;
  font-weight: bold;
}

.total td {
  height: 28px;
}

.bottom-bar {
  display: flex;
  align-items: center;
  height: 29px;
  padding-left: 4px;
  background-color: #005f85;
  border-top: 1px solid #1386b4;
  color: #fff;
}

.bottom-bar label {
  margin-right: 9px;
}

.bottom-bar input[type="checkbox"] {
  width: 15px;
  height: 15px;
  margin: 0 5px 0 0;
  border-color: #005478;
  background: none;
}

.bottom-bar input[type="checkbox"]:checked::after {
  margin: 3px 0 0 2px;
  border-color: #005478;
}

.bottom-bar .select {
  flex: none;
  width: 70px;
  margin-left: 9px;
}

/* map */
.canvas {
  display: block;
  width: 100%;
  height: 100%;
}

.place,
.plate {
  font-family: "Noto Sans", "Open Sans", sans-serif;
  text-anchor: middle;
}

.place {
  paint-order: stroke;
  stroke: #ffffff99;
  stroke-width: 2px;
}

.town {
  font-size: 11px;
  fill: #222;
}

.district {
  font-size: 12px;
  font-style: italic;
  fill: #555;
}

.airport {
  font-size: 10px;
  font-style: italic;
  fill: #7050b0;
}

.river {
  font-size: 10px;
  font-style: italic;
  fill: #4d80b3;
}

.factory {
  font-size: 10px;
  font-style: italic;
  fill: #734a6e;
}

.region {
  font-size: 10px;
  fill: #94709b;
}

.plate {
  font-size: 10px;
  fill: #444;
}

.marker text {
  font-size: 10px;
  font-weight: bold;
  text-anchor: middle;
  fill: currentColor;
}

.controls {
  position: absolute;
  top: 12px;
  display: flex;
  flex-direction: column;
  gap: 12px;
}

.controls.left {
  left: 10px;
}

.controls.right {
  right: 10px;
}

.box {
  width: 26px;
  min-height: 26px;
  border-radius: 2px;
  background-color: #fff;
  box-shadow: 0 1px 3px #0003;
  color: #005b80;
}

.box button {
  width: 26px;
  height: 26px;
}

.layers {
  margin-top: 38px;
}

.zoom {
  appearance: none;
  writing-mode: vertical-lr;
  direction: rtl;
  width: 14px;
  height: 90px;
  margin: 0 auto;
  background: linear-gradient(#bcbcb0, #bcbcb0) center / 4px 100% no-repeat;
}

.zoom::-webkit-slider-thumb {
  appearance: none;
  width: 14px;
  height: 9px;
  border-radius: 2px;
  background-color: #fff;
  box-shadow: 0 1px 2px #0004;
}
```
